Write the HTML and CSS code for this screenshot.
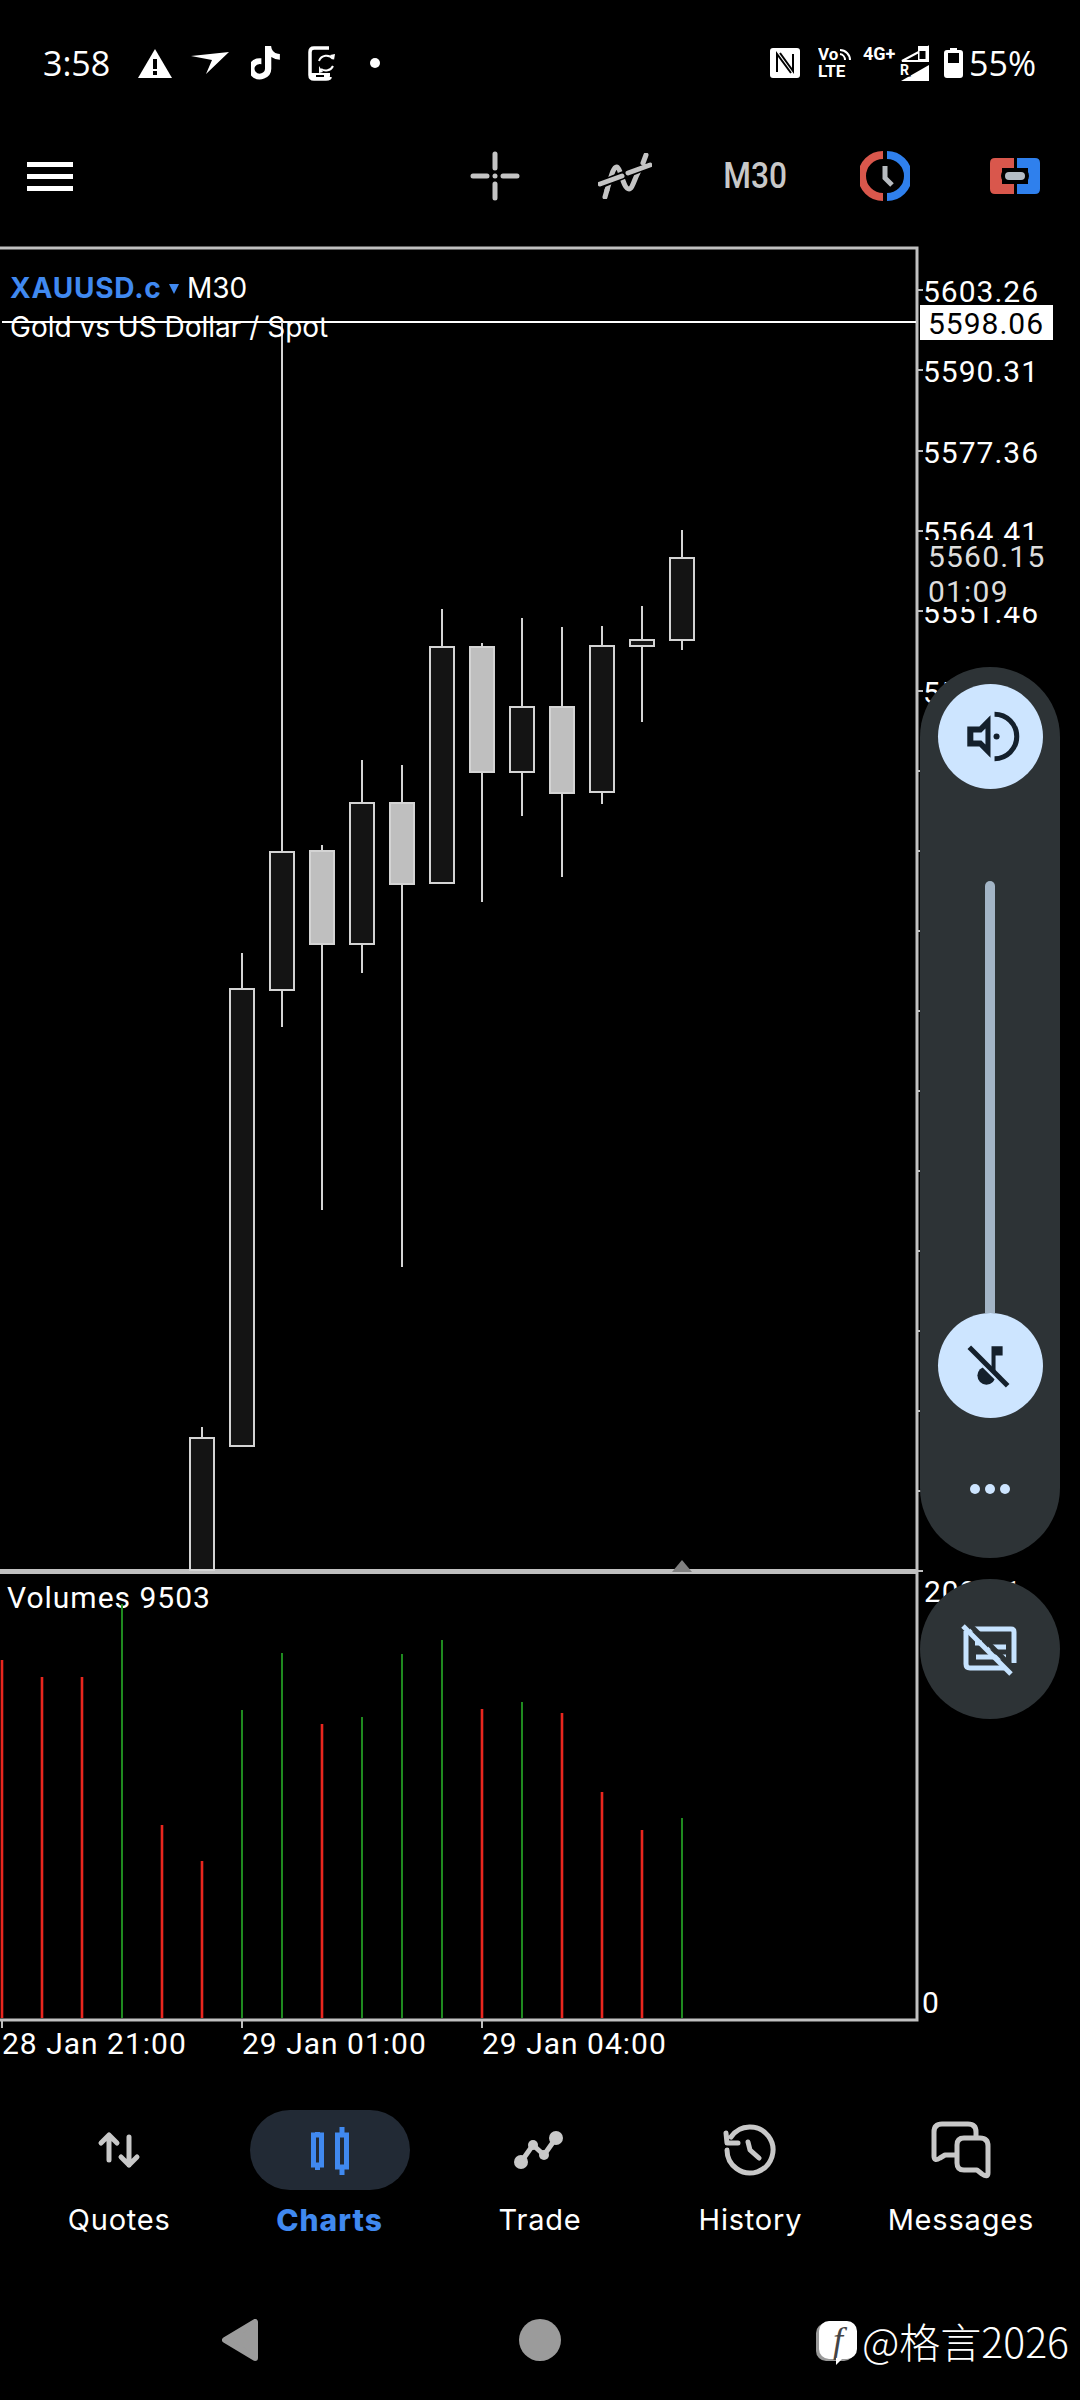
FILE: index.html
```html
<!DOCTYPE html>
<html lang="en">
<head>
    <meta charset="UTF-8">
    <meta name="viewport" content="width=device-width, initial-scale=1.0">
    <title>XAUUSD.c M30</title>
    <link rel="stylesheet" href="styles.css">
</head>
<body>

    <div class="status-bar">
        <span class="clock">3:58</span>
        <svg class="st-warn" width="34" height="29" viewBox="0 0 34 29"><path class="white" d="M17 0L34 29H0Z"/><rect class="black" x="15" y="10" width="4" height="10"/><rect class="black" x="15" y="22" width="4" height="4"/></svg>
        <svg class="st-send" width="38" height="22" viewBox="0 0 38 22"><path class="white" d="M0 4L38 0L15 22L21 8Z"/></svg>
        <svg class="st-tiktok" width="29" height="34" viewBox="4.6 2 16.1 20.4" preserveAspectRatio="none"><path class="white" d="M19.59 6.69a4.83 4.83 0 0 1-3.77-4.25V2h-3.45v13.67a2.89 2.89 0 0 1-5.2 1.74 2.89 2.89 0 0 1 2.31-4.64 2.93 2.93 0 0 1 .88.13V9.4a6.84 6.84 0 0 0-1-.05A6.33 6.33 0 0 0 5 20.1a6.34 6.34 0 0 0 10.86-4.43v-7a8.16 8.16 0 0 0 4.77 1.52v-3.4a4.85 4.85 0 0 1-1.04-.1z"/></svg>
        <svg class="st-phone" width="28" height="35" viewBox="0 0 28 35"><path class="st-line" d="M21 2H6Q2 2 2 6V29Q2 33 6 33H18Q22 33 22 31"/><path class="white" d="M2 27H22V29.5Q22 33 18 33H6Q2 33 2 29.5Z"/><rect class="black" x="8" y="29" width="8" height="2"/><path class="st-thin" d="M11 15A8 8 0 0 1 25 13M25 20A8 8 0 0 1 13 23"/><path class="white" d="M22 9L27 8L26 14ZM15 26L11 27L11 20Z"/></svg>
        <span class="st-dot"></span>

        <svg class="st-nfc" width="30" height="30" viewBox="0 0 30 30"><rect class="white" width="30" height="30" rx="3"/><path class="st-cut" d="M7 24V6L21 25M10 5L23 23V6"/></svg>
        <svg class="st-volte" width="38" height="38" viewBox="0 -3 38 38"><text class="st-small" x="0" y="13">Vo</text><path class="st-thin" d="M22 3A10 10 0 0 1 32 13M22 7A6 6 0 0 1 27 13"/><text class="st-small" x="0" y="30">LTE</text></svg>
        <svg class="st-signal" width="66" height="42" viewBox="0 -3 66 42"><text class="st-net" x="0" y="15">4G+</text><path class="st-thin" d="M39 16L65 2V16Z"/><rect class="white" x="55" y="1" width="11" height="16"/><rect class="black" x="56.5" y="6" width="6" height="8"/><path class="white" d="M38 36L66 20V36Z"/><text class="st-r" x="37" y="30">R</text></svg>
        <svg class="st-batt" width="19" height="30" viewBox="0 0 19 30"><path class="white" d="M6 0H13V2H16Q19 2 19 5V27Q19 30 16 30H3Q0 30 0 27V5Q0 2 3 2H6Z"/><rect class="black" x="4" y="5" width="11" height="10"/></svg>
        <span class="st-pct">55%</span>
    </div>

    <div class="toolbar">
        <div class="menu-btn"><span></span><span></span><span></span></div>
        <div class="tool-group">
            <div class="tool">
                <svg width="50" height="50" viewBox="0 0 50 50"><path class="tool-line" d="M25 3V17M25 33V47M3 25H17M33 25H47"/><circle class="tool-dot" cx="25" cy="25" r="2.5"/></svg>
            </div>
            <div class="tool">
                <svg width="54" height="46" viewBox="0 0 54 46"><path class="tool-line" d="M9 37C14 20 16 13 19 14C23 15 25 36 31 36C35 36 37 22 44 13"/><path class="tool-gap" d="M1 32L53 11"/><path class="tool-line" d="M2 31L24 23M30 20L52 12M7 44L9 37M48 2L45 10"/></svg>
            </div>
            <div class="tool"><span class="tf-label">M30</span></div>
            <div class="tool">
                <svg width="50" height="50" viewBox="0 0 50 50"><path class="arc-red" d="M23 4A21 21 0 0 0 23 46"/><path class="arc-blue" d="M27 4A21 21 0 0 1 27 46"/><path class="clock-hand" d="M25 15V27L32 34"/></svg>
            </div>
            <div class="tool">
                <svg width="50" height="36" viewBox="0 0 50 36"><path class="fill-red" d="M5 0H24V10H12V26H24V36H5Q0 36 0 31V5Q0 0 5 0Z"/><path class="fill-blue" d="M27 0H45Q50 0 50 5V31Q50 36 45 36H27V26H38V10H27Z"/><rect class="black" x="11" y="10" width="28" height="16" rx="8"/><rect class="pill-gray" x="15" y="14" width="20" height="8" rx="4"/></svg>
            </div>
        </div>
    </div>

    <div class="chart-section">
        <svg class="chart" width="1080" height="1830" viewBox="0 240 1080 1830">
            <!-- frame -->
            <path class="frame" d="M0 248H917V2020H0"/>
            <path class="frame-thick" d="M0 1571.5H918"/>
            <path class="marker" d="M672 1572L682 1560L692 1572Z"/>
            <path class="bid-line" d="M2 322H916"/>

            <!-- price scale -->
            <path class="frame-tick" d="M917 290H923M917 370H923M917 451H923M917 531H923M917 611H923M917 691H923M917 771H923M917 851H923M917 931H923M917 1011H923M917 1091H923M917 1171H923M917 1251H923M917 1331H923M917 1411H923M917 1491H923M917 1571H923"/>
            <text class="axis" x="923" y="302">5603.26</text>
            <text class="axis" x="923" y="382">5590.31</text>
            <text class="axis" x="923" y="463">5577.36</text>
            <text class="axis" x="923" y="543">5564.41</text>
            <text class="axis" x="923" y="623">5551.46</text>
            <text class="axis" x="923" y="703">5538.51</text>
            <rect class="black" x="919" y="540" width="150" height="67"/>
            <text class="axis dim" x="928" y="567">5560.15</text>
            <text class="axis dim" x="928" y="602">01:09</text>
            <rect class="white" x="920" y="305" width="133" height="35"/>
            <text class="axis dark" x="928" y="334">5598.06</text>

            <!-- candles -->
            <path class="wick" d="M202 1427V1438M242 953V989M282 322V852M282 990V1027M322 845V851M322 944V1210M362 760V803M362 944V973M402 765V803M402 884V1267M442 609V647M482 643V647M482 772V902M522 618V707M522 772V816M562 627V707M562 793V877M602 626V646M602 792V804M642 606V640M642 646V722M682 530V558M682 640V650"/>
            <rect class="candle-dn" x="190" y="1438" width="24" height="132"/>
            <rect class="candle-dn" x="230" y="989" width="24" height="457"/>
            <rect class="candle-dn" x="270" y="852" width="24" height="138"/>
            <rect class="candle-up" x="310" y="851" width="24" height="93"/>
            <rect class="candle-dn" x="350" y="803" width="24" height="141"/>
            <rect class="candle-up" x="390" y="803" width="24" height="81"/>
            <rect class="candle-dn" x="430" y="647" width="24" height="236"/>
            <rect class="candle-up" x="470" y="647" width="24" height="125"/>
            <rect class="candle-dn" x="510" y="707" width="24" height="65"/>
            <rect class="candle-up" x="550" y="707" width="24" height="86"/>
            <rect class="candle-dn" x="590" y="646" width="24" height="146"/>
            <rect class="candle-dn" x="630" y="640" width="24" height="6"/>
            <rect class="candle-dn" x="670" y="558" width="24" height="82"/>

            <!-- chart labels -->
            <text class="symbol" x="10" y="298">XAUUSD.c</text>
            <path class="symbol-arrow" d="M169 284H179L174 294Z"/>
            <text class="period" x="187" y="298">M30</text>
            <text class="period" x="10" y="337">Gold vs US Dollar / Spot</text>

            <!-- volumes -->
            <text class="axis" x="7" y="1608">Volumes 9503</text>
            <path class="vol-red" d="M2 1660V2018M42 1677V2018M82 1677V2018M162 1825V2018M202 1861V2018M322 1724V2018M482 1709V2018M562 1713V2018M602 1792V2018M642 1830V2018"/>
            <path class="vol-green" d="M122 1604V2018M242 1710V2018M282 1653V2018M362 1717V2018M402 1654V2018M442 1640V2018M522 1702V2018M682 1818V2018"/>
            <text class="axis" x="924" y="1602">2095.1</text>
            <text class="axis" x="922" y="2013">0</text>

            <!-- time scale -->
            <path class="frame-tick" d="M2 2020V2028M242 2020V2028M482 2020V2028"/>
            <text class="axis" x="2" y="2054">28 Jan 21:00</text>
            <text class="axis" x="242" y="2054">29 Jan 01:00</text>
            <text class="axis" x="482" y="2054">29 Jan 04:00</text>
        </svg>

        <div class="volume-panel">
            <div class="vol-circle">
                <svg width="105" height="105" viewBox="0 0 104 104"><path class="vol-ink" fill-rule="evenodd" d="M29 42H41L52 31V73L41 62H29ZM35 48V56H43L47 60V44L43 48Z"/><path class="vol-arc" d="M56 30A22 22 0 0 1 56 74"/><circle class="vol-ink" cx="58" cy="52" r="3"/></svg>
            </div>
            <div class="vol-track"></div>
            <div class="vol-circle">
                <svg width="105" height="105" viewBox="0 0 104 104"><circle class="vol-ink" cx="48" cy="62" r="9"/><path class="vol-ink" d="M53 33H64V42H57V62H53Z"/><path class="vol-cut" d="M27 34L65 72"/><path class="vol-slash" d="M31 34L69 72"/></svg>
            </div>
            <div class="vol-dots"><span></span><span></span><span></span></div>
        </div>

        <div class="caption-btn">
            <svg width="140" height="140" viewBox="0 0 140 140"><path class="cap-line" d="M50 50H91Q94 50 94 53V84M84 89H50Q46 89 46 85V52"/><path class="cap-line" d="M68 68H86M56 78H86M55 64H62"/><path class="cap-cut" d="M47 43L93 89"/><path class="cap-line" d="M43 47L91 95"/></svg>
        </div>
    </div>

    <div class="bottom-nav">
        <div class="nav-item">
            <div class="nav-icon">
                <svg width="44" height="40" viewBox="0 0 44 40"><path class="nav-line" d="M12 30V5M4 13L12 5L20 13M32 7V35M24 27L32 35L40 27"/></svg>
            </div>
            <span class="nav-label">Quotes</span>
        </div>
        <div class="nav-item active">
            <div class="nav-icon">
                <svg width="44" height="52" viewBox="0 0 44 52"><rect class="nav-candle" x="5.5" y="11" width="8" height="30"/><rect class="nav-candle" x="29.5" y="11" width="9" height="32"/><path class="nav-wick" d="M9.5 8V11M9.5 41V46M34 3V11M34 43V51"/></svg>
            </div>
            <span class="nav-label">Charts</span>
        </div>
        <div class="nav-item">
            <div class="nav-icon">
                <svg width="58" height="50" viewBox="0 0 58 50"><path class="nav-line" d="M10 37L22 20L33 30L45 13"/><circle class="nav-fill" cx="10" cy="37" r="7"/><circle class="nav-fill" cx="22" cy="20" r="5"/><circle class="nav-fill" cx="33" cy="30" r="5"/><circle class="nav-fill" cx="45" cy="13" r="7"/></svg>
            </div>
            <span class="nav-label">Trade</span>
        </div>
        <div class="nav-item">
            <div class="nav-icon">
                <svg width="60" height="60" viewBox="0 0 60 60"><path class="nav-line" d="M11 17A23 23 0 1 1 7 30M6 13L7 23H18M28 22L30 30L39 38"/></svg>
            </div>
            <span class="nav-label">History</span>
        </div>
        <div class="nav-item">
            <div class="nav-icon">
                <svg width="60" height="58" viewBox="0 0 60 58"><path class="nav-line" d="M45 15V11Q45 3 37 3H11Q3 3 3 11V35Q3 41 9 37L14 34H25"/><path class="nav-line" d="M33 17H49Q57 17 57 25V52Q57 57 51 53L46 49H33Q26 49 26 42V24Q26 17 33 17Z"/></svg>
            </div>
            <span class="nav-label">Messages</span>
        </div>
    </div>

    <div class="system-nav">
        <svg class="sys-back" width="38" height="42" viewBox="0 0 38 42"><path class="sys-fill" d="M3 21L33 3V39Z"/></svg>
        <span class="sys-home"></span>
        <div class="watermark">
            <span class="wm-logo">f</span>
            <span class="wm-text">@格言2026</span>
        </div>
    </div>

</body>
</html>
```

FILE: styles.css
```css
body {
    margin: 0;
    width: 1080px;
    height: 2400px;
    overflow: hidden;
    background-color: #000;
    color: #fff;
    font-family: Roboto, sans-serif;
    display: flex;
    flex-direction: column;
}

svg {
    display: block;
    flex-shrink: 0;
}

.white { fill: #fff; }
.black { fill: #000; }

/* status bar */
.status-bar {
    height: 126px;
    padding: 0 44px 0 43px;
    display: flex;
    align-items: center;
    box-sizing: border-box;
}

.clock,
.st-pct {
    font-family: "Open Sans", sans-serif;
    font-size: 34px;
    line-height: 40px;
    color: #fff;
}

.st-warn { margin-left: 28px; }
.st-send { margin-left: 19px; }
.st-tiktok { margin-left: 22px; }
.st-phone { margin-left: 28px; }

.st-dot {
    width: 10px;
    height: 10px;
    margin-left: 34px;
    border-radius: 50%;
    background-color: #fff;
}

.st-nfc { margin-left: auto; }
.st-volte { margin-left: 18px; margin-right: -4px; }
.st-signal { margin-left: 11px; }
.st-batt { margin-left: 15px; }
.st-pct { margin-left: 6px; }

.st-line { fill: none; stroke: #fff; stroke-width: 3.5; }
.st-thin { fill: none; stroke: #fff; stroke-width: 2; }
.st-cut { fill: none; stroke: #000; stroke-width: 2; }
.st-small { font-size: 17px; font-weight: 700; fill: #fff; }
.st-net { font-size: 18px; font-weight: 700; fill: #fff; }
.st-r { font-size: 14px; font-weight: 700; fill: #fff; stroke: #000; stroke-width: 3px; paint-order: stroke; }

/* toolbar */
.toolbar {
    height: 100px;
    padding-left: 27px;
    display: flex;
    align-items: center;
    justify-content: space-between;
}

.menu-btn {
    width: 46px;
    display: flex;
    flex-direction: column;
    gap: 7px;
}

.menu-btn span {
    height: 5px;
    background-color: #fff;
}

.tool-group {
    display: flex;
}

.tool {
    width: 130px;
    display: flex;
    justify-content: center;
    align-items: center;
}

.tool-line { fill: none; stroke: #c4c4c4; stroke-width: 5; stroke-linecap: round; }
.tool-gap { fill: none; stroke: #000; stroke-width: 8; }
.tool-dot { fill: #c4c4c4; }

.tf-label {
    display: inline-block;
    font-family: Roboto, sans-serif;
    font-size: 36px;
    font-weight: 500;
    color: #c8c8c8;
    transform: scaleX(0.88);
}

.arc-red { fill: none; stroke: #d9574c; stroke-width: 8; }
.arc-blue { fill: none; stroke: #2f80ed; stroke-width: 8; }
.clock-hand { fill: none; stroke: #b8bcc0; stroke-width: 5; }
.fill-red { fill: #d9574c; }
.fill-blue { fill: #2f80ed; }
.pill-gray { fill: #b4bcc4; }

/* chart */
.chart-section {
    position: relative;
    margin-top: 14px;
    height: 1830px;
}

.frame { fill: none; stroke: #c0c0c0; stroke-width: 3; }
.frame-thick { fill: none; stroke: #c0c0c0; stroke-width: 5; }
.frame-tick { fill: none; stroke: #c0c0c0; stroke-width: 2; }
.marker { fill: #808080; }
.bid-line { fill: none; stroke: #fff; stroke-width: 2; }

.axis {
    font-family: Roboto, sans-serif;
    font-size: 30px;
    letter-spacing: 1px;
    fill: #fff;
}

.axis.dim { fill: #ddd; letter-spacing: 1.2px; }
.axis.dark { fill: #000; }

.wick { fill: none; stroke: #d4d4d4; stroke-width: 2; }
.candle-dn { fill: #141414; stroke: #d4d4d4; stroke-width: 2; }
.candle-up { fill: #bfbfbf; stroke: #d4d4d4; stroke-width: 2; }

.symbol {
    font-family: Inter, sans-serif;
    font-size: 28px;
    font-weight: 700;
    letter-spacing: 0.8px;
    fill: #4089f0;
}

.symbol-arrow { fill: #4089f0; }

.period {
    font-family: Inter, sans-serif;
    font-size: 28px;
    fill: #fff;
}

.vol-red { fill: none; stroke: #e8261e; stroke-width: 2.6; }
.vol-green { fill: none; stroke: #1f8a1f; stroke-width: 2; }

/* system volume overlay */
.volume-panel {
    position: absolute;
    left: 920px;
    top: 427px;
    width: 140px;
    height: 891px;
    padding-top: 17px;
    box-sizing: border-box;
    border-radius: 70px;
    background-color: #2d3336;
    display: flex;
    flex-direction: column;
    align-items: center;
}

.vol-circle {
    width: 105px;
    height: 105px;
    border-radius: 50%;
    background-color: #cde5ff;
    flex-shrink: 0;
}

.vol-track {
    width: 10px;
    height: 432px;
    margin-top: 92px;
    border-radius: 5px 5px 0 0;
    background-color: #a3b5c6;
}

.vol-ink { fill: #14202c; }
.vol-arc { fill: none; stroke: #14202c; stroke-width: 5; }
.vol-cut { fill: none; stroke: #cde5ff; stroke-width: 4; }
.vol-slash { fill: none; stroke: #14202c; stroke-width: 5; }

.vol-dots {
    margin-top: 66px;
    display: flex;
    gap: 5px;
}

.vol-dots span {
    width: 10px;
    height: 10px;
    border-radius: 50%;
    background-color: #cde5ff;
}

.caption-btn {
    position: absolute;
    left: 920px;
    top: 1339px;
    width: 140px;
    height: 140px;
    border-radius: 50%;
    background-color: #2d3336;
}

.cap-line { fill: none; stroke: #c6e3ff; stroke-width: 5; }
.cap-cut { fill: none; stroke: #2d3336; stroke-width: 5; }

/* bottom navigation */
.bottom-nav {
    margin-top: 40px;
    padding: 0 14px;
    display: flex;
}

.nav-item {
    flex: 1;
    display: flex;
    flex-direction: column;
    align-items: center;
}

.nav-icon {
    width: 160px;
    height: 80px;
    border-radius: 40px;
    display: flex;
    justify-content: center;
    align-items: center;
}

.nav-label {
    margin-top: 10px;
    font-family: Inter, sans-serif;
    font-size: 29px;
    line-height: 40px;
    letter-spacing: 0.8px;
    color: #fff;
}

.active .nav-icon { background-color: #222a35; }
.active .nav-label { font-size: 30px; font-weight: 800; letter-spacing: 1px; color: #4089f0; }

.nav-line { fill: none; stroke: #c8c8c8; stroke-width: 5; stroke-linecap: round; stroke-linejoin: round; }
.nav-fill { fill: #c8c8c8; }
.nav-candle { fill: #222a35; stroke: #4089f0; stroke-width: 5; }
.nav-wick { fill: none; stroke: #4089f0; stroke-width: 5; }

/* system navigation */
.system-nav {
    margin-top: 60px;
    height: 80px;
    padding-left: 222px;
    display: flex;
    align-items: center;
}

.sys-fill { fill: #9b9b9b; stroke: #9b9b9b; stroke-width: 6; stroke-linejoin: round; }

.sys-home {
    width: 42px;
    height: 42px;
    margin-left: 259px;
    border-radius: 50%;
    background-color: #9b9b9b;
}

.watermark {
    margin-left: 258px;
    display: flex;
    align-items: center;
    gap: 5px;
}

.wm-logo {
    position: relative;
    width: 38px;
    height: 38px;
    border-radius: 10px;
    background-color: #fff;
    box-shadow: -3px 2px 0 #999;
    font-family: "Liberation Serif", serif;
    font-size: 36px;
    line-height: 38px;
    font-style: italic;
    text-align: center;
    color: #444;
}

.wm-logo::after {
    content: "";
    position: absolute;
    left: 17px;
    bottom: -6px;
    border-top: 7px solid #fff;
    border-right: 7px solid transparent;
}

.wm-text {
    font-family: "Noto Sans CJK SC", "Noto Sans", sans-serif;
    font-size: 41px;
    font-weight: 300;
    line-height: 50px;
    color: #fff;
}
```
